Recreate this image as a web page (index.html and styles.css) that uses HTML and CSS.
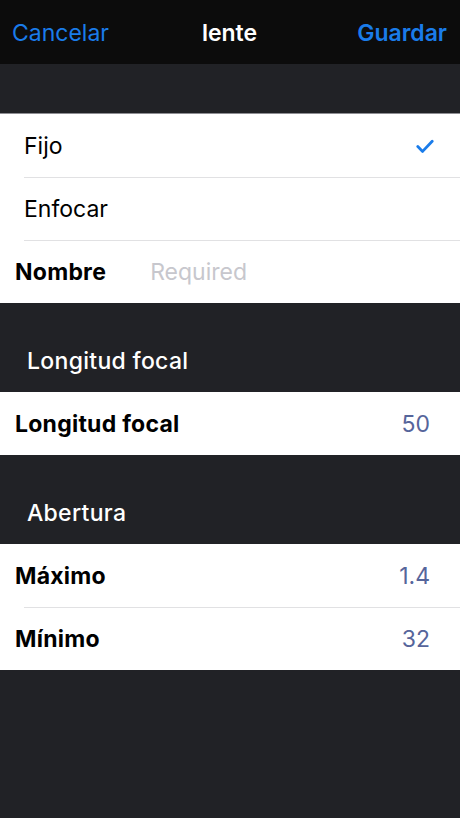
FILE: index.html
```html
<!DOCTYPE html>
<html lang="es">
<head>
<meta charset="utf-8">
<title>lente</title>
<link rel="stylesheet" href="styles.css">
</head>
<body>
<header class="nav">
  <span class="nav-btn nav-left">Cancelar</span>
  <span class="nav-title">lente</span>
  <span class="nav-btn nav-right">Guardar</span>
</header>
<div class="spacer-top"></div>
<section class="group">
  <div class="row row-option">
    <span class="opt">Fijo</span>
    <svg class="check" width="18" height="15" viewBox="0 0 18 15"><path d="M1.8 7.6 L6.6 12.4 L16.2 2.2" fill="none" stroke="#1a7cea" stroke-width="2.8" stroke-linecap="round" stroke-linejoin="round"/></svg>
  </div>
  <div class="row row-option sep">
    <span class="opt">Enfocar</span>
  </div>
  <div class="row row-field sep">
    <span class="label">Nombre</span>
    <span class="placeholder">Required</span>
  </div>
</section>
<div class="section-head"><span>Longitud focal</span></div>
<section class="group">
  <div class="row row-field">
    <span class="label">Longitud focal</span>
    <span class="value">50</span>
  </div>
</section>
<div class="section-head"><span>Abertura</span></div>
<section class="group">
  <div class="row row-field">
    <span class="label">Máximo</span>
    <span class="value">1.4</span>
  </div>
  <div class="row row-field sep">
    <span class="label">Mínimo</span>
    <span class="value">32</span>
  </div>
</section>
</body>
</html>
```
FILE: styles.css
```css
html, body {
  margin: 0;
  padding: 0;
  background: #212226;
  height: 100%;
}
body {
  font-family: Inter, "Liberation Sans", sans-serif;
  -webkit-font-smoothing: antialiased;
}
.nav {
  height: 64px;
  background: #0c0c0c;
  display: grid;
  grid-template-columns: 1fr auto 1fr;
  align-items: center;
  padding: 2px 13px 0 12px;
  font-size: 23px;
  line-height: 28px;
  box-sizing: border-box;
}
.nav-btn { color: #1a7cea; }
.nav-left { justify-self: start; }
.nav-right { justify-self: end; font-weight: 600; }
.nav-title { color: #fff; font-weight: 600; }
.spacer-top { height: 49px; border-bottom: 1px solid #8e8e93; }
.group { background: #fff; }
.row {
  height: 63px;
  display: flex;
  align-items: center;
  box-sizing: border-box;
}
.sep {
  background: linear-gradient(#e1e1e3, #e1e1e3) 24px 0 / 100% 1px no-repeat;
}
.row-option { padding: 1px 26px 0 24px; justify-content: space-between; }
.opt { font-size: 23px; color: #000; }
.check { display: block; }
.row-field { padding: 1px 30px 0 15px; }
.label { font-size: 23px; font-weight: 700; color: #000; letter-spacing: 0.25px; }
.placeholder { margin-left: 44px; font-size: 23px; color: #c7c7cd; }
.value { margin-left: auto; font-size: 23px; color: #56659b; }
.section-head {
  height: 89px;
  display: flex;
  align-items: flex-end;
  padding: 0 0 16px 27px;
  box-sizing: border-box;
  color: #fff;
  font-size: 23px;
  font-weight: 500;
  line-height: 29px;
  letter-spacing: 0.3px;
}
```
